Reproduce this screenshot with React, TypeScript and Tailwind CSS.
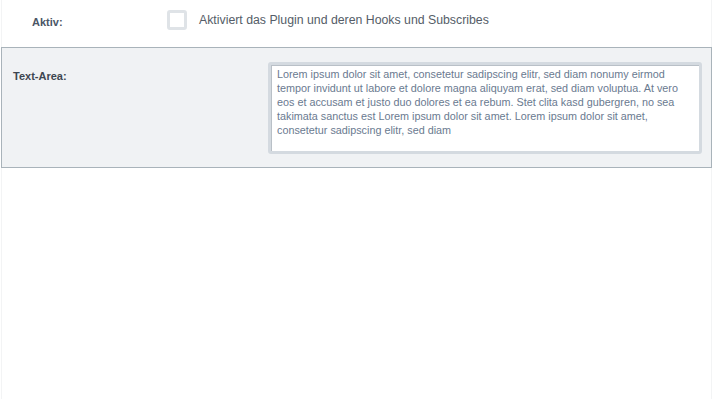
import React from "react";

const loremText =
  "Lorem ipsum dolor sit amet, consetetur sadipscing elitr, sed diam nonumy eirmod tempor invidunt ut labore et dolore magna aliquyam erat, sed diam voluptua. At vero eos et accusam et justo duo dolores et ea rebum. Stet clita kasd gubergren, no sea takimata sanctus est Lorem ipsum dolor sit amet. Lorem ipsum dolor sit amet, consetetur sadipscing elitr, sed diam";

const App: React.FC = () => {
  return (
    <div className="min-h-[399px] bg-white pl-px font-['Liberation_Sans',Arial,sans-serif]">
      <div className="w-[711px] min-h-[399px] border-x border-[#f3f4f5]">
        {/* Checkbox row */}
        <div className="flex h-[47px] items-start pt-[10px]">
          <label className="w-[164px] pl-[30px] pt-[4px] text-[11px] leading-4 font-bold text-[#4b5666]">
            Aktiv:
          </label>
          <span className="ml-[1px] h-5 w-5 rounded-[3px] border-[3px] border-[#dfe3e7] bg-white" />
          <span className="ml-3 pt-[1px] text-[12.3px] leading-[18px] text-[#555d68]">
            Aktiviert das Plugin und deren Hooks und Subscribes
          </span>
        </div>

        {/* Textarea row */}
        <div className="-mx-px flex h-[121px] border border-[#a9b3ba] bg-[#f0f2f4]">
          <label className="w-[266px] pl-[11px] pt-[20px] text-[11px] font-bold text-[#3d4650]">
            Text-Area:
          </label>
          <div className="mt-[14px] h-[92px] w-[434px] rounded-[3px] border-[3px] border-[#d4dae0] bg-white">
            <textarea
              readOnly
              value={loremText}
              className="h-full w-full resize-none border-t border-l border-[#b9c0c7] px-[5px] pt-[1px] text-[10.8px] leading-[14px] text-[#6a7a90] outline-none"
            />
          </div>
        </div>
      </div>
    </div>
  );
};

export default App;
